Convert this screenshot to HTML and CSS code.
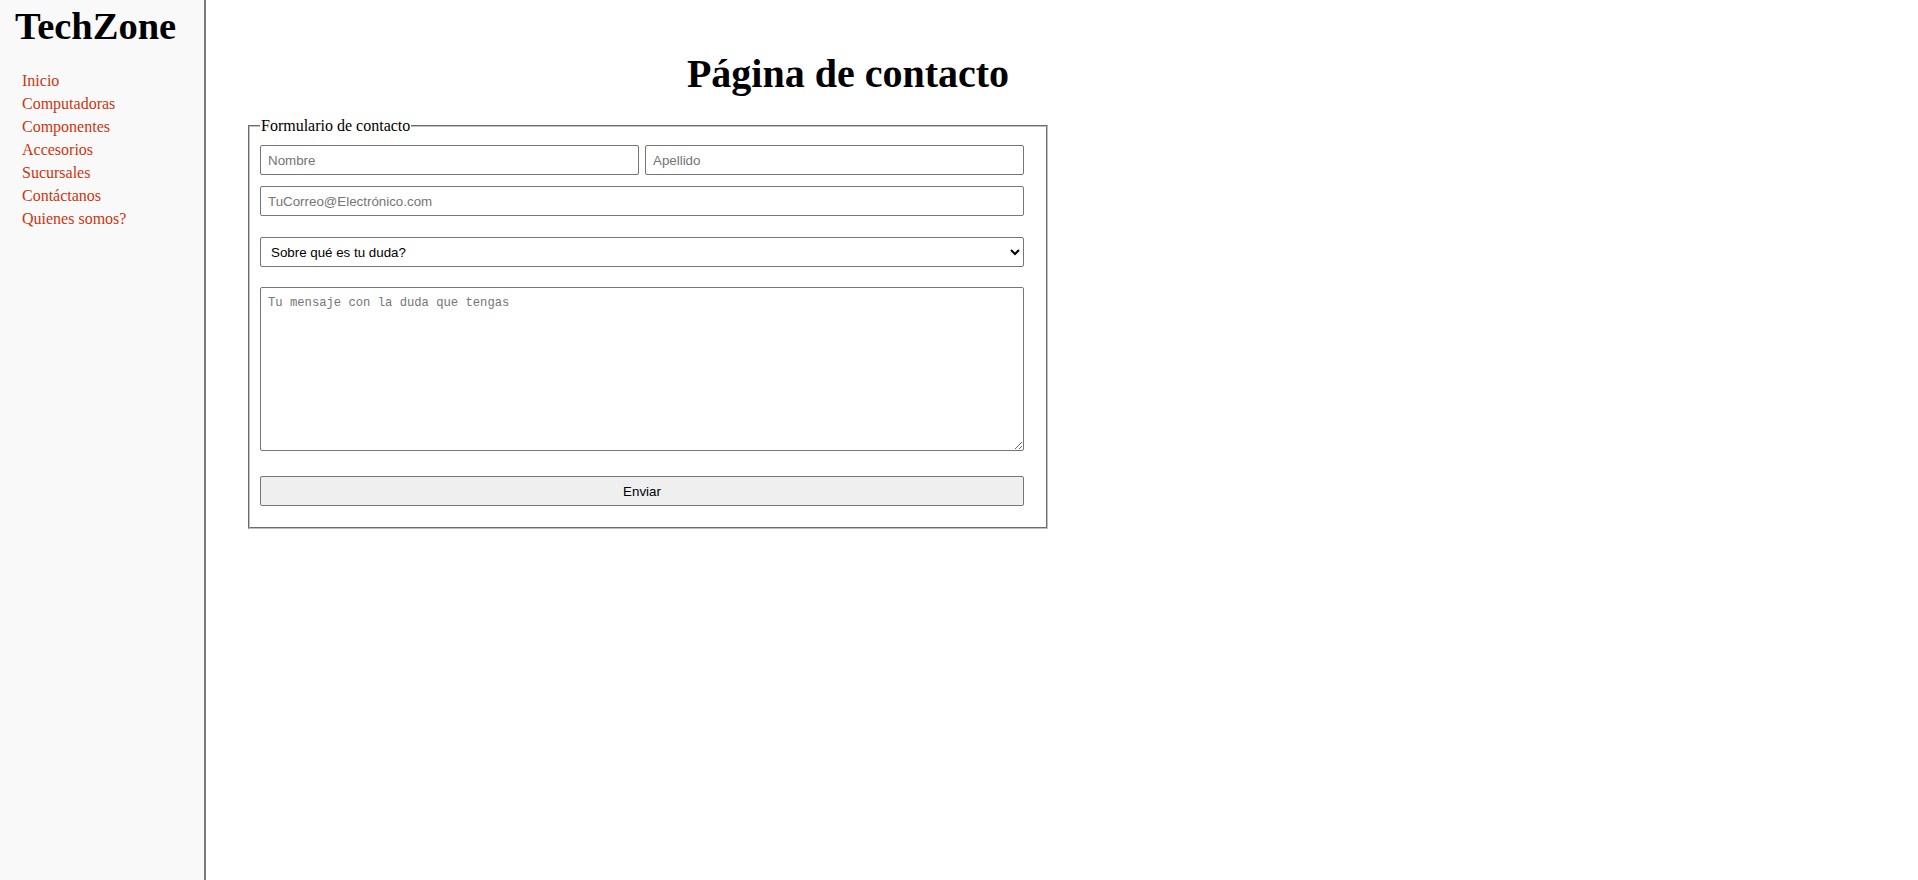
FILE: index.html
```html
<!DOCTYPE html>
<html lang="es">
<head>
<meta charset="utf-8">
<title>TechZone - Contacto</title>
<link rel="stylesheet" href="styles.css">
</head>
<body>
<div class="layout">
  <aside class="sidebar">
    <h1 class="brand">TechZone</h1>
    <ul class="nav">
      <li><a href="#">Inicio</a></li>
      <li><a href="#">Computadoras</a></li>
      <li><a href="#">Componentes</a></li>
      <li><a href="#">Accesorios</a></li>
      <li><a href="#">Sucursales</a></li>
      <li><a href="#">Contáctanos</a></li>
      <li><a href="#">Quienes somos?</a></li>
    </ul>
  </aside>
  <main class="main">
    <div class="content">
      <h1 class="title">Página de contacto</h1>
      <form class="form">
        <fieldset class="fieldset">
          <legend class="legend">Formulario de contacto</legend>
          <div class="fields">
            <div class="row">
              <input class="field" type="text" placeholder="Nombre">
              <input class="field" type="text" placeholder="Apellido">
            </div>
            <input class="field email" type="email" placeholder="TuCorreo@Electrónico.com">
            <select class="field select">
              <option>Sobre qué es tu duda?</option>
            </select>
            <textarea class="message" placeholder="Tu mensaje con la duda que tengas"></textarea>
            <button class="submit" type="button">Enviar</button>
          </div>
        </fieldset>
      </form>
    </div>
  </main>
</div>
</body>
</html>
```
FILE: styles.css
```css
html, body {
  margin: 0;
  padding: 0;
  background: #ffffff;
}

body {
  font-family: "Liberation Serif", "Times New Roman", serif;
  font-size: 16px;
  color: #000;
}

.layout {
  display: flex;
  min-height: 100vh;
}

.sidebar {
  width: 204px;
  flex: 0 0 204px;
  background: #f9f9f9;
  border-right: 2px solid #7a7a7a;
  min-height: 880px;
}

.brand {
  margin: 4px 0 0 15px;
  font-size: 38.5px;
  font-weight: bold;
  line-height: normal;
}

.nav {
  list-style: none;
  margin: 21px 0 0 0;
  padding: 0 0 0 22px;
}

.nav li {
  line-height: 23px;
}

.nav a {
  color: #c93610;
  text-decoration: none;
}

.main {
  flex: 1;
  padding-left: 42px;
}

.content {
  width: 1200px;
}

.title {
  margin: 50px 0 0 0;
  text-align: center;
  font-size: 40px;
  font-weight: bold;
  line-height: normal;
}

.form {
  margin: 20px 0 0 0;
}

.fieldset {
  box-sizing: border-box;
  width: 800px;
  margin: 0;
  padding: 0 10px 21px 10px;
  border: 2px groove #c0c0c0;
}

.legend {
  padding: 0 1px;
  font-size: 16px;
}

.fields {
  width: 764px;
  display: flex;
  flex-direction: column;
  padding-top: 10px;
}

.row {
  display: grid;
  grid-template-columns: 1fr 1fr;
  column-gap: 6px;
}

.field {
  box-sizing: border-box;
  height: 30px;
  margin: 0;
  padding: 0 7px;
  border: 1px solid #767676;
  border-radius: 2px;
  font-family: "Liberation Sans", Arial, sans-serif;
  font-size: 13.33px;
  background: #fff;
  color: #000;
}

.field::placeholder {
  color: #757575;
}

.email {
  margin-top: 11px;
}

.select {
  margin-top: 21px;
  padding: 0 6px;
}

.message {
  box-sizing: border-box;
  margin-top: 20px;
  height: 164px;
  padding: 8px 7px;
  border: 1px solid #767676;
  border-radius: 2px;
  font-family: "Liberation Mono", "DejaVu Sans Mono", monospace;
  font-size: 12.2px;
  resize: vertical;
}

.message::placeholder {
  color: #757575;
}

.submit {
  box-sizing: border-box;
  margin-top: 25px;
  height: 30px;
  border: 1px solid #767676;
  border-radius: 2px;
  background: #efefef;
  font-family: "Liberation Sans", Arial, sans-serif;
  font-size: 13.33px;
  color: #000;
}
```
